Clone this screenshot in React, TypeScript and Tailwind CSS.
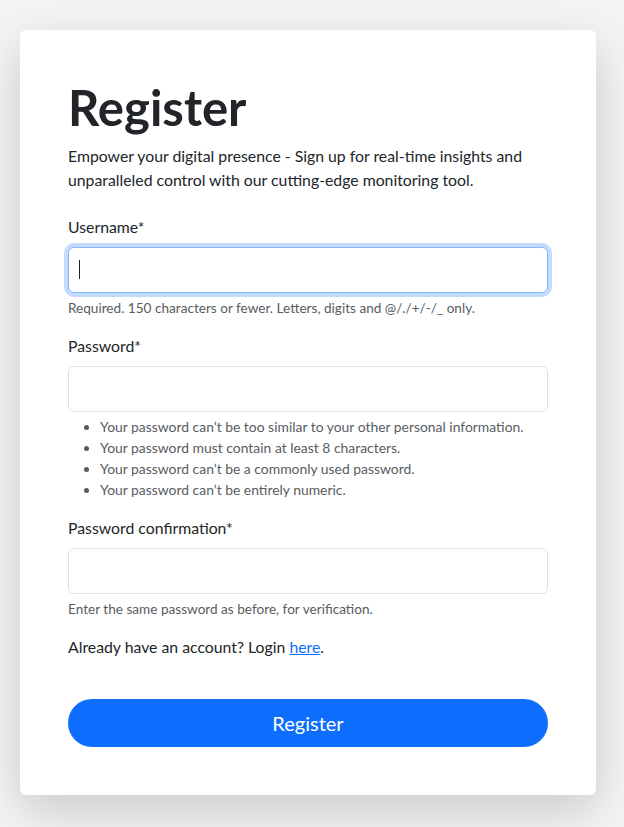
export default function App() {
  const rules = [
    "Your password can\u2019t be too similar to your other personal information.",
    "Your password must contain at least 8 characters.",
    "Your password can\u2019t be a commonly used password.",
    "Your password can\u2019t be entirely numeric.",
  ];

  return (
    <div className="min-h-screen bg-[#f3f4f6] pt-[30px] px-[20px] pb-[32px] font-['Lato','Liberation_Sans',sans-serif] text-[#212529]">
      <div className="w-[576px] bg-white rounded-md shadow-[0_16px_48px_rgba(0,0,0,0.175)] px-12 pt-12 pb-12">
        <h1 className="text-[49px] leading-[58px] font-bold mb-2">Register</h1>
        <p className="text-[15.8px] leading-6 mb-[23px]">
          Empower your digital presence - Sign up for real-time insights and unparalleled control with our cutting-edge
          monitoring tool.
        </p>

        <form onSubmit={(e) => e.preventDefault()}>
          <div className="mb-[15px]">
            <label className="block text-[15.8px] leading-6 mb-2">Username*</label>
            <div className="relative">
              <input
                type="text"
                className="block w-full h-[46px] px-3 rounded-md border border-[#86b7fe] bg-white outline-none shadow-[0_0_0_4px_rgba(13,110,253,0.25)]"
              />
              <span className="absolute left-[11px] top-[13px] w-px h-[19px] bg-[#212529]"></span>
            </div>
            <div className="mt-[5px] text-[13.6px] leading-[21px] text-[#595c5f]">
              Required. 150 characters or fewer. Letters, digits and @/./+/-/_ only.
            </div>
          </div>

          <div className="mb-4">
            <label className="block text-[15.8px] leading-6 mb-2">Password*</label>
            <input
              type="password"
              className="block w-full h-[46px] px-3 rounded-md border border-[#dee2e6] bg-white outline-none"
            />
            <ul className="mt-1 pl-8 list-disc text-[13.9px] leading-[21px] text-[#595c5f]">
              {rules.map((r) => (
                <li key={r}>{r}</li>
              ))}
            </ul>
          </div>

          <div className="mb-[15px]">
            <label className="block text-[15.8px] leading-6 mb-2">Password confirmation*</label>
            <input
              type="password"
              className="block w-full h-[46px] px-3 rounded-md border border-[#dee2e6] bg-white outline-none"
            />
            <div className="mt-[5px] text-[13.6px] leading-[21px] text-[#595c5f]">
              Enter the same password as before, for verification.
            </div>
          </div>

          <p className="text-[15.8px] leading-6">
            Already have an account? Login{" "}
            <a href="#" className="text-[#0d6efd] underline">
              here
            </a>
            .
          </p>

          <button
            type="submit"
            className="mt-10 w-full h-12 rounded-full bg-[#0d6efd] text-white text-xl leading-[30px]"
          >
            Register
          </button>
        </form>
      </div>
    </div>
  );
}
